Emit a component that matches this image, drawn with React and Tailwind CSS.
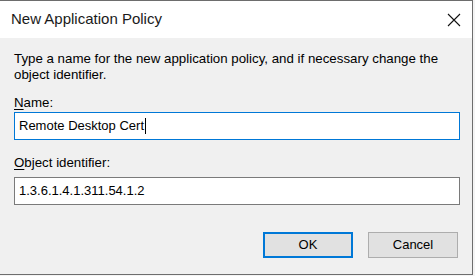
import React from 'react';

const App = () => {
  return (
    <div className="w-[475px] h-[276px] bg-[#f4f4f4]" style={{ fontFamily: '"Liberation Sans", Arial, sans-serif' }}>
      {/* Dialog window */}
      <div className="w-[473px] h-[275px] border-t border-r border-b border-[#6d6d6d] bg-[#f0f0f0] flex flex-col text-black">
        {/* Title bar */}
        <div className="h-[37px] bg-white flex items-center justify-between pl-[11px] pr-[11px]">
          <span className="text-[15px] text-[#1a1a1a]">New Application Policy</span>
          <svg width="14" height="14" viewBox="0 0 14 14">
            <path d="M1 1 L13 13 M13 1 L1 13" stroke="#111" strokeWidth="1.1" fill="none" />
          </svg>
        </div>

        {/* Body */}
        <div className="flex-1 flex flex-col pl-[14px] pr-[12px] pt-[13px] text-[13.3px] leading-[16px]">
          <p>
            Type a name for the new application policy, and if necessary change the object identifier.
          </p>

          <label className="mt-[12px] leading-[15px]">
            <span className="underline underline-offset-2">N</span>ame:
          </label>
          <div className="mt-[2px] h-[28px] border border-[#0078d7] bg-white flex items-center pl-[4px] text-[13px]">
            <span>Remote Desktop Cert</span>
            <span className="w-px h-[16px] bg-black ml-[1px]" />
          </div>

          <label className="mt-[15px] leading-[15px]">
            <span className="underline underline-offset-2">O</span>bject identifier:
          </label>
          <div className="mt-[7px] h-[28px] border border-[#7a7a7a] bg-white flex items-center pl-[4px] text-[13px]">
            <span>1.3.6.1.4.1.311.54.1.2</span>
          </div>

          {/* Buttons */}
          <div className="mt-[27px] flex justify-end gap-[15px] pr-[2px]">
            <button className="w-[90px] h-[26px] border-2 border-[#0078d7] bg-[#e1e1e1] text-[13px]">OK</button>
            <button className="w-[90px] h-[26px] border border-[#adadad] bg-[#e1e1e1] text-[13px]">Cancel</button>
          </div>
        </div>
      </div>
    </div>
  );
};

export default App;
